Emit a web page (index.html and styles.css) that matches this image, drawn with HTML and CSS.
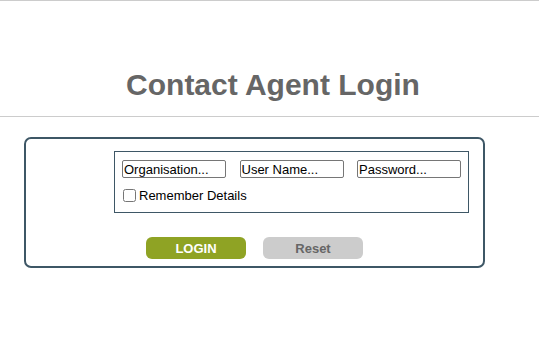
FILE: index.html
```html
<!DOCTYPE html>
<html lang="en">
<head>
  <meta charset="UTF-8" />
  <title>Contact Agent Login</title>
  <link rel="stylesheet" href="styles.css">
</head>
<body>

  <hr class="rule top-rule">

  <h1 class="title">Contact Agent Login</h1>

  <hr class="rule">

  <div class="login-box">
    <div class="fields">
      <div class="field-row">
        <input class="text-input" type="text" value="Organisation...">
        <input class="text-input" type="text" value="User Name...">
        <input class="text-input" type="text" value="Password...">
      </div>
      <label class="remember">
        <input type="checkbox" class="remember-check">Remember Details
      </label>
    </div>

    <div class="buttons">
      <button class="btn btn-login">LOGIN</button>
      <button class="btn btn-reset">Reset</button>
    </div>
  </div>

</body>
</html>
```

FILE: styles.css
```css
body {
  margin: 0;
  padding: 0;
  background: #fff;
  font-family: "Liberation Sans", Arial, sans-serif;
}

.rule {
  margin: 0;
  border: none;
  border-top: 1px solid #cccccc;
  height: 0;
}

.top-rule {
  margin-top: 0;
}

.title {
  margin: 0;
  padding: 67px 0 0 7px;
  height: 48px;
  text-align: center;
  font-size: 30px;
  font-weight: bold;
  color: #666666;
}

.login-box {
  margin: 20px 0 0 24px;
  width: 457px;
  height: 127px;
  border: 2px solid #3e5766;
  border-radius: 7px;
}

.fields {
  margin: 12px 0 0 88px;
  width: 353px;
  height: 60px;
  border: 1px solid #3e5766;
}

.field-row {
  display: flex;
  gap: 13.5px;
  padding: 8px 0 0 7px;
}

.text-input {
  width: 100px;
  height: 16px;
  padding: 0 1px;
  margin: 0;
  border: 1px solid #767676;
  border-radius: 2px;
  font-family: "Liberation Sans", Arial, sans-serif;
  font-size: 13px;
  color: #000;
}

.remember {
  display: flex;
  align-items: center;
  margin: 10px 0 0 8px;
  font-size: 13px;
  color: #000;
}

.remember-check {
  width: 13px;
  height: 13px;
  margin: 0 3px 0 0;
}

.buttons {
  display: flex;
  gap: 17px;
  margin: 24px 0 0 120px;
}

.btn {
  width: 100px;
  height: 22px;
  border: none;
  border-radius: 6px;
  font-family: "Liberation Sans", Arial, sans-serif;
  font-size: 13px;
  font-weight: bold;
  padding: 0;
}

.btn-login {
  background: #8fa324;
  color: #fff;
}

.btn-reset {
  background: #cccccc;
  color: #666666;
}
```
